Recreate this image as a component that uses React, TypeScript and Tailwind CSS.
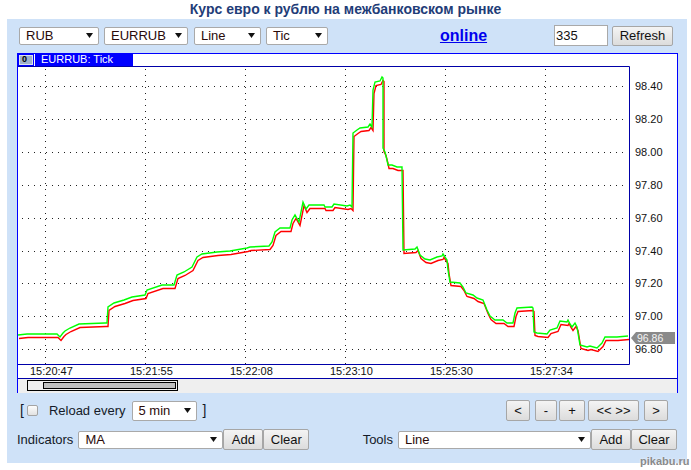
import React from 'react';

// traced tick series (page coords), red is the same curve a bit lower
const GREEN: [number, number][] = [
  [18, 335], [27, 334], [57, 334], [60, 337], [63, 333], [65, 331], [70, 328], [79, 324], [105, 323], [107, 323],
  [108, 307], [114, 303], [124, 300], [132, 297], [145, 295], [147, 290], [162, 285], [174, 285], [177, 275],
  [184, 272], [192, 267], [197, 257], [202, 254], [217, 252], [230, 251], [247, 248], [250, 247], [269, 246],
  [272, 242], [275, 232], [280, 228], [290, 228], [292, 220], [295, 215], [299, 222], [303, 202], [306, 209],
  [309, 205], [324, 205], [325, 207], [332, 207], [334, 204], [347, 206], [350, 205], [352, 207], [353, 133],
  [357, 130], [360, 128], [368, 127], [370, 124], [372, 127], [373, 90], [375, 82], [380, 81], [382, 77],
  [383, 78], [383, 148], [385, 152], [387, 160], [388, 165], [392, 165], [397, 167], [402, 167], [403, 250],
  [415, 249], [417, 247], [420, 255], [425, 259], [430, 260], [437, 257], [442, 256], [443, 254], [447, 260],
  [448, 270], [450, 282], [460, 283], [463, 287], [466, 293], [473, 295], [477, 298], [483, 300], [487, 310],
  [490, 316], [495, 320], [503, 320], [507, 323], [513, 323], [515, 313], [517, 308], [532, 307], [533, 308],
  [534, 332], [537, 333], [547, 334], [550, 330], [557, 328], [560, 321], [567, 322], [568, 320], [570, 324],
  [572, 327], [575, 323], [577, 327], [578, 333], [580, 345], [587, 347], [590, 346], [597, 348], [602, 343],
  [605, 337], [617, 337], [628, 336],
];

const OX = 18;
const OY = 66;
const pts = (dx: number, dy: number) =>
  GREEN.map(([x, y]) => `${x - OX + dx},${y - OY + dy}`).join(' ');

const gridY = [86, 118.9, 151.8, 184.7, 217.6, 250.5, 283.4, 316.3, 349.2];
const yLabels = ['98.40', '98.20', '98.00', '97.80', '97.60', '97.40', '97.20', '97.00', '96.80'];
const gridX = [45, 145, 245, 345, 445, 545];
const times = ['15:20:47', '15:21:55', '15:22:08', '15:23:10', '15:25:30', '15:27:34'];

const Arrow = () => (
  <svg width="7" height="5" viewBox="0 0 7 5">
    <path d="M0 0H7L3.5 5Z" fill="#111" />
  </svg>
);

const Select = ({ label, className }: { label: string; className: string }) => (
  <div
    className={`flex items-center justify-between bg-white border border-[#a9a9a9] rounded-[2px] pl-[6px] pr-[5px] text-[13px] text-[#2a0a0a] ${className}`}
  >
    <span>{label}</span>
    <Arrow />
  </div>
);

const Btn = ({ label, className }: { label: string; className: string }) => (
  <button
    className={`flex items-center justify-center border border-[#a6a6a6] rounded-[2px] bg-linear-to-b from-[#f4f4f4] to-[#dcdcdc] text-[13px] text-[#111] ${className}`}
  >
    {label}
  </button>
);

const Chart = () => (
  <div className="ml-[10px] mt-[7px] w-[661px] h-[340px] flex flex-col border-x border-t border-[#0000ff] bg-white">
    {/* header with tab */}
    <div className="h-[12px] flex">
      <div className="w-[115px] h-[13px] -mt-[1px] bg-[#0000ff] flex items-center">
        <div className="ml-[1px] w-[14px] h-[10px] bg-[#9fb0cc] border border-[#dde3ee] flex items-center pl-[2px] text-[9px] font-bold leading-none text-black">
          0
        </div>
        <div className="ml-[1px] w-[1px] h-[12px] bg-white" />
        <span className="ml-[6px] text-[11px] leading-none text-white">EURRUB: Tick</span>
      </div>
    </div>

    <svg width="659" height="312" className="block text-[11px]">
      {gridY.map((gy, i) => (
        <line
          key={`h${i}`}
          x1={4}
          x2={608}
          y1={Math.round(gy - OY) + 0.5}
          y2={Math.round(gy - OY) + 0.5}
          stroke="#222"
          strokeDasharray="1 5"
        />
      ))}
      {gridX.map((gx, i) => (
        <line
          key={`v${i}`}
          x1={gx - OX + 0.5}
          x2={gx - OX + 0.5}
          y1={3}
          y2={298}
          stroke="#222"
          strokeDasharray="1 5"
        />
      ))}

      <polyline points={pts(1, 3.5)} fill="none" stroke="#ff0000" strokeWidth="1.4" />
      <polyline points={pts(0, 0)} fill="none" stroke="#00ff00" strokeWidth="1.4" />

      {/* plot frame */}
      <path d="M0 0.5H611.5V298.5H0" fill="none" stroke="#0000a8" strokeWidth="1" />

      {yLabels.map((l, i) => (
        <text key={l} x={617} y={gridY[i] - OY + 4} fill="#111">
          {l}
        </text>
      ))}
      {times.map((t, i) => (
        <text key={t} x={gridX[i] - 15 - OX} y={309} fill="#111">
          {t}
        </text>
      ))}

      {/* last price marker */}
      <polygon points="613,272 618,266 657,266 657,278 618,278" fill="#8a8a8a" />
      <text x={619} y={276} fill="#f4f4f4" className="text-[10.5px]">
        96.86
      </text>
    </svg>

    <div className="h-[15px] border-t border-[#0000a8] bg-[#efefef]">
      <div className="ml-[9px] mt-[1px] w-[151px] h-[11px] border border-black flex pl-[15px] pr-[1px] py-[1px]">
        <div className="flex-1 border border-black bg-[#c0c0c0]" />
      </div>
    </div>
  </div>
);

export default function App() {
  return (
    <div className="relative w-[691px] h-[470px] overflow-hidden bg-white font-['Liberation_Sans',Arial,sans-serif]">
      <div className="h-[19px] flex justify-center pt-[1px] text-[14px] font-bold leading-[17px] text-[#1f3d78]">
        Курс евро к рублю на межбанковском рынке
      </div>

      <div className="ml-[7px] w-[680px] h-[444px] bg-[#cfe2f8] flex flex-col">
        {/* top controls */}
        <div className="mt-[6px] h-[21px] flex items-center pl-[12px]">
          <Select label="RUB" className="w-[80px] h-[18px]" />
          <Select label="EURRUB" className="ml-[5px] w-[84px] h-[18px]" />
          <Select label="Line" className="ml-[6px] w-[67px] h-[18px]" />
          <Select label="Tic" className="ml-[5px] w-[62px] h-[18px]" />
          <a className="ml-[112px] w-[47px] flex justify-center text-[16px] font-bold text-[#0000ee] underline cursor-pointer">
            online
          </a>
          <input
            defaultValue="335"
            className="ml-[67px] w-[54px] h-[21px] bg-white border border-[#a9a9a9] pl-[1px] text-[13px] text-[#111] outline-none"
          />
          <Btn label="Refresh" className="ml-[4px] w-[61px] h-[20px]" />
        </div>

        <Chart />

        {/* reload + navigation */}
        <div className="mt-[7px] h-[21px] flex items-center justify-between pl-[13px] pr-[19px] text-[13px] text-[#141a28]">
          <div className="flex items-center">
            <span className="text-[14px]">[</span>
            <div className="ml-[3px] w-[11px] h-[11px] border border-[#a4a4a4] rounded-[2px] bg-linear-to-b from-[#fdfdfd] to-[#e2e2e2]" />
            <span className="ml-[11px]">Reload every</span>
            <Select label="5 min" className="ml-[6px] w-[65px] h-[20px]" />
            <span className="ml-[6px] text-[14px]">]</span>
          </div>
          <div className="flex items-center">
            <Btn label="<" className="w-[24px] h-[21px]" />
            <Btn label="-" className="ml-[5px] w-[22px] h-[21px]" />
            <Btn label="+" className="ml-[2px] w-[26px] h-[21px]" />
            <Btn label="<< >>" className="ml-[3px] w-[51px] h-[21px]" />
            <Btn label=">" className="ml-[5px] w-[24px] h-[21px]" />
          </div>
        </div>

        {/* indicators / tools */}
        <div className="mt-[8px] h-[21px] flex items-center justify-between pl-[10px] pr-[10px] text-[13px] text-[#141a28]">
          <div className="flex items-center">
            <span>Indicators</span>
            <Select label="MA" className="ml-[5px] w-[145px] h-[18px]" />
            <Btn label="Add" className="w-[40px] h-[21px]" />
            <Btn label="Clear" className="w-[46px] h-[21px]" />
          </div>
          <div className="flex items-center">
            <span>Tools</span>
            <Select label="Line" className="ml-[5px] w-[193px] h-[18px]" />
            <Btn label="Add" className="w-[40px] h-[21px]" />
            <Btn label="Clear" className="w-[46px] h-[21px]" />
          </div>
        </div>
      </div>

      {/* watermark */}
      <span className="absolute left-[640px] top-[453px] text-[11px] font-bold text-[#8a8a8a] [text-shadow:0_0_2px_#fff]">
        pikabu.ru
      </span>
    </div>
  );
}
